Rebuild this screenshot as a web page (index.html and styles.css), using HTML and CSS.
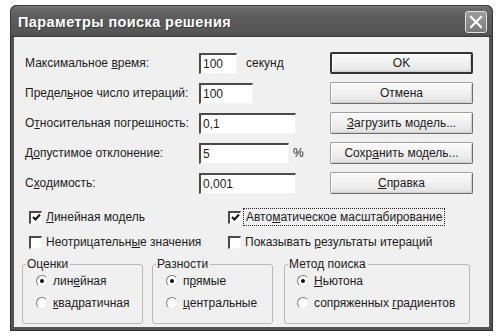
FILE: index.html
```html
<!DOCTYPE html>
<html lang="ru">
<head>
<meta charset="utf-8">
<title>Параметры поиска решения</title>
<link rel="stylesheet" href="styles.css">
</head>
<body>
<div class="window">
  <div class="titlebar">
    <span class="title">Параметры поиска решения</span>
    <span class="close"><svg width="14" height="14" viewBox="0 0 14 14"><path d="M2 2 L12 12 M12 2 L2 12" stroke="#fff" stroke-width="2.2" stroke-linecap="square"/></svg></span>
  </div>
  <div class="client">
    <div class="top">
      <div class="fields">
        <div class="row"><span class="lbl">Максимальное <u>в</u>ремя:</span><span class="input w38">100</span><span class="suffix">секунд</span></div>
        <div class="row"><span class="lbl">Предел<u>ь</u>ное число итераций:</span><span class="input w54">100</span></div>
        <div class="row"><span class="lbl">О<u>т</u>носительная погрешность:</span><span class="input w97">0,1</span></div>
        <div class="row"><span class="lbl">Д<u>о</u>пустимое отклонение:</span><span class="input w90">5</span><span class="suffix pct">%</span></div>
        <div class="row"><span class="lbl">С<u>х</u>одимость:</span><span class="input w97">0,001</span></div>
      </div>
      <div class="buttons">
        <span class="btn default">OK</span>
        <span class="btn">Отмена</span>
        <span class="btn"><u>З</u>агрузить модель...</span>
        <span class="btn">Сохр<u>а</u>нить модель...</span>
        <span class="btn"><u>С</u>правка</span>
      </div>
    </div>
    <div class="checks">
      <span class="chk"><span class="box"><svg width="9" height="9" viewBox="0 0 9 9"><path d="M1 4 L3.5 6.5 L8 1.5" fill="none" stroke="#111" stroke-width="2"/></svg></span><span><u>Л</u>инейная модель</span></span>
      <span class="chk"><span class="box"><svg width="9" height="9" viewBox="0 0 9 9"><path d="M1 4 L3.5 6.5 L8 1.5" fill="none" stroke="#111" stroke-width="2"/></svg></span><span class="focus">Авто<u>м</u>атическое масштабирование</span></span>
      <span class="chk"><span class="box"></span><span>Неотрицательн<u>ы</u>е значения</span></span>
      <span class="chk"><span class="box"></span><span>Показывать <u>р</u>езультаты итераций</span></span>
    </div>
    <div class="groups">
      <fieldset class="group gw1">
        <legend>Оценки</legend>
        <span class="radio"><span class="dot on"></span><span>лин<u>е</u>йная</span></span>
        <span class="radio"><span class="dot"></span><span><u>к</u>вадратичная</span></span>
      </fieldset>
      <fieldset class="group gw1">
        <legend>Разности</legend>
        <span class="radio"><span class="dot on"></span><span>п<u>р</u>ямые</span></span>
        <span class="radio"><span class="dot"></span><span><u>ц</u>ентральные</span></span>
      </fieldset>
      <fieldset class="group gw2">
        <legend>Метод поиска</legend>
        <span class="radio"><span class="dot on"></span><span><u>Н</u>ьютона</span></span>
        <span class="radio"><span class="dot"></span><span>сопряженных <u>г</u>радиентов</span></span>
      </fieldset>
    </div>
  </div>
</div>
</body>
</html>
```

FILE: styles.css
```css
html, body {
  margin: 0;
  padding: 0;
  background: #ffffff;
}
body {
  font-family: "Liberation Sans", Arial, sans-serif;
  font-size: 12px;
  color: #1c1c1c;
}
u {
  text-decoration: underline;
  text-underline-offset: 1px;
}
.window {
  margin: 5px 0 0 10px;
  width: 483px;
  height: 326px;
  background: #545454;
  border-radius: 7px 7px 0 0;
  box-shadow: inset 0 0 0 1px #2e2e2e;
  display: flex;
  flex-direction: column;
}
.titlebar {
  height: 32px;
  flex: none;
  display: flex;
  align-items: center;
  justify-content: space-between;
  padding: 0 6px 0 8px;
  border-radius: 7px 7px 0 0;
  background: linear-gradient(#8a8a8a 0px, #6a6a6a 3px, #5c5c5c 12px, #575757 26px, #4e4e4e 32px);
  box-shadow: inset 0 0 0 1px #3a3a3a;
}
.title {
  color: #ffffff;
  font-weight: bold;
  font-size: 14.5px;
  letter-spacing: 0.4px;
  text-shadow: 1px 1px 0 #3a3a3a;
  margin-top: 1px;
}
.close {
  width: 20px;
  height: 20px;
  border: 1px solid #e0e0e0;
  border-radius: 3px;
  background: linear-gradient(#9c9c9c, #7a7a7a);
  display: flex;
  align-items: center;
  justify-content: center;
  margin-top: 1px;
}
.client {
  flex: 1;
  margin: 0 4px 4px 4px;
  background: #f0f0f0;
  display: flex;
  flex-direction: column;
}
.top {
  display: flex;
  padding: 15px 0 0 11px;
}
.fields {
  width: 305px;
  display: flex;
  flex-direction: column;
  gap: 8px;
}
.row {
  height: 22px;
  display: flex;
  align-items: center;
}
.lbl {
  width: 174px;
  flex: none;
}
.input {
  box-sizing: border-box;
  height: 21px;
  background: #ffffff;
  border-top: 2px solid #4a4a4a;
  border-left: 2px solid #4a4a4a;
  border-right: 1px solid #f4f4f4;
  border-bottom: 1px solid #f4f4f4;
  padding: 1px 0 0 2px;
  line-height: 17px;
}
.w38 { width: 38px; }
.w54 { width: 54px; }
.w97 { width: 97px; }
.w90 { width: 90px; }
.suffix {
  margin-left: 9px;
}
.suffix.pct {
  margin-left: 4px;
}
.buttons {
  width: 143px;
  display: flex;
  flex-direction: column;
  gap: 8px;
}
.btn {
  box-sizing: border-box;
  height: 22px;
  display: flex;
  align-items: center;
  justify-content: center;
  border: 1px solid #a0a0a0;
  border-right-color: #6e6e6e;
  border-bottom-color: #6e6e6e;
  border-radius: 2px;
  background: linear-gradient(#fbfbfb, #ececec 70%, #dedede);
  box-shadow: inset 1px 1px 0 #ffffff, inset -1px -1px 0 #cfcfcf;
}
.btn.default {
  border: 2px solid #333333;
}
.checks {
  display: grid;
  grid-template-columns: 199px auto;
  row-gap: 7px;
  padding: 14px 0 0 15px;
}
.chk {
  height: 18px;
  display: flex;
  align-items: center;
  gap: 4px;
}
.box {
  box-sizing: border-box;
  width: 13px;
  height: 13px;
  background: #ffffff;
  border-top: 2px solid #4a4a4a;
  border-left: 2px solid #4a4a4a;
  border-right: 1px solid #f4f4f4;
  border-bottom: 1px solid #f4f4f4;
  display: flex;
  align-items: center;
  justify-content: center;
}
.focus {
  outline: 1px dotted #222;
  outline-offset: 1px;
  padding: 0 1px;
}
.groups {
  display: flex;
  padding: 6px 0 0 8px;
}
.group {
  margin: 0;
  box-sizing: border-box;
  height: 67px;
  border: 1px solid #b9b9b9;
  border-radius: 3px;
  padding: 2px 0 0 13px;
  display: flex;
  flex-direction: column;
  gap: 6px;
}
.group + .group {
  margin-left: 9px;
}
.group + .group + .group {
  margin-left: 11px;
}
.gw1 { width: 121px; }
.gw2 { width: 186px; padding-left: 12px; }
legend {
  padding: 0 2px 0 1px;
  margin-left: -10px;
  line-height: 14px;
}
.gw2 legend {
  margin-left: -9px;
}
.radio {
  height: 16px;
  display: flex;
  align-items: center;
  gap: 5px;
}
.dot {
  box-sizing: border-box;
  width: 12px;
  height: 12px;
  border-radius: 50%;
  background: #ffffff;
  border: 1px solid;
  border-color: #7a7a7a #e8e8e8 #e8e8e8 #7a7a7a;
  display: flex;
  align-items: center;
  justify-content: center;
}
.dot.on::after {
  content: "";
  width: 4px;
  height: 4px;
  border-radius: 50%;
  background: #111111;
}
```
